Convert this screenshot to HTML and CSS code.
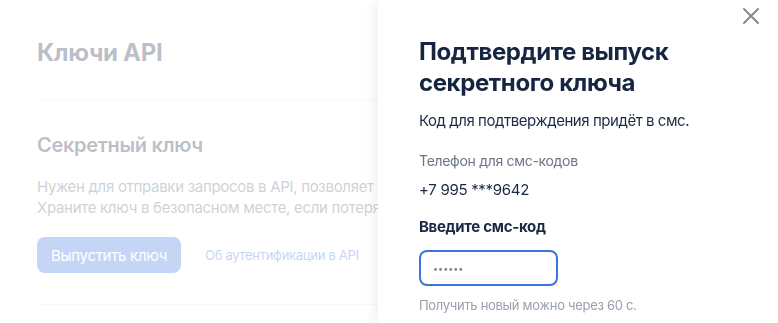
FILE: index.html
```html
<!DOCTYPE html>
<html lang="ru">
<head>
    <meta charset="UTF-8">
    <meta name="viewport" content="width=device-width, initial-scale=1.0">
    <title>Ключи API</title>
    <link rel="stylesheet" href="styles.css">
</head>
<body>
    <div class="page">
        <h1>Ключи API</h1>
        <hr class="line">
        <h2>Секретный ключ</h2>
        <p class="text">Нужен для отправки запросов в API, позволяет получить доступ к данным аккаунта.<br>
        Храните ключ в безопасном месте, если потеряете — выпустите новый.</p>
        <div class="actions">
            <button class="btn">Выпустить ключ</button>
            <a class="link" href="#">Об аутентификации в API</a>
        </div>
        <hr class="line line-bottom">
    </div>

    <div class="overlay"></div>

    <div class="drawer">
        <button class="close" aria-label="Закрыть">
            <svg width="16" height="16" viewBox="0 0 16 16">
                <path d="M1 1L15 15M15 1L1 15" stroke="#7b8594" stroke-width="1.8" stroke-linecap="round"/>
            </svg>
        </button>
        <h3>Подтвердите выпуск секретного ключа</h3>
        <p class="note">Код для подтверждения придёт в смс.</p>
        <div class="phone-label">Телефон для смс-кодов</div>
        <div class="phone">+7 995 ***9642</div>
        <label class="field-label" for="code">Введите смс-код</label>
        <input class="field" id="code" type="text" value="••••••">
        <div class="hint">Получить новый можно через 60 с.</div>
    </div>
</body>
</html>
```

FILE: styles.css
```css
body {
    margin: 0;
    font-family: Inter, "Noto Sans", sans-serif;
    background: #fff;
    color: #1b2a43;
    letter-spacing: -0.3px;
    overflow: hidden;
}
.page {
    padding: 33px 0 0 37px;
    width: 341px;
    overflow: hidden;
    white-space: nowrap;
}
h1 {
    font-size: 24px;
    font-weight: 700;
    margin: 0;
    line-height: 40px;
}
.line {
    border: 0;
    border-top: 1px solid #e6e9ee;
    margin: 26px 0 0 0;
}
h2 {
    font-size: 20px;
    font-weight: 600;
    margin: 31px 0 0 0;
    line-height: 28px;
}
.text {
    font-size: 15px;
    line-height: 21px;
    color: #5d6876;
    margin: 17px 0 0 0;
}
.actions {
    display: flex;
    align-items: center;
    gap: 24px;
    margin-top: 19px;
}
.btn {
    background: #3b72e2;
    color: #fff;
    border: 0;
    border-radius: 8px;
    height: 36px;
    padding: 0 14px;
    font-family: inherit;
    font-size: 15px;
    letter-spacing: -0.3px;
}
.link {
    color: #3b72e2;
    font-size: 13px;
    text-decoration: none;
}
.line-bottom {
    margin-top: 31px;
}
.overlay {
    position: fixed;
    inset: 0;
    background: rgba(255, 255, 255, 0.7);
}
.drawer {
    position: fixed;
    top: 0;
    right: 0;
    bottom: 0;
    width: 400px;
    box-sizing: border-box;
    padding: 36px 30px 0 41px;
    background: #fff;
    box-shadow: -4px 0 12px rgba(0, 0, 0, 0.06);
}
.close {
    position: absolute;
    top: 8px;
    right: 19px;
    padding: 0;
    border: 0;
    background: none;
}
h3 {
    font-size: 24px;
    font-weight: 700;
    line-height: 31px;
    margin: 0;
    color: #162640;
    letter-spacing: -0.4px;
}
.note {
    font-size: 15px;
    line-height: 20px;
    margin: 13px 0 0 0;
    letter-spacing: -0.45px;
}
.phone-label {
    font-size: 14px;
    color: #6b7584;
    margin-top: 20px;
    line-height: 20px;
}
.phone {
    font-size: 15px;
    margin-top: 9px;
    line-height: 20px;
}
.field-label {
    display: block;
    font-size: 15px;
    font-weight: 700;
    margin-top: 17px;
    line-height: 20px;
}
.field {
    display: block;
    margin-top: 13px;
    width: 139px;
    height: 36px;
    box-sizing: border-box;
    border: 2px solid #3b73e0;
    border-radius: 8px;
    padding: 0 12px;
    font-family: inherit;
    font-size: 9px;
    color: #7c8594;
    letter-spacing: 0;
    outline: none;
}
.hint {
    font-size: 13px;
    color: #98a1ad;
    margin-top: 10px;
    line-height: 18px;
}
```
